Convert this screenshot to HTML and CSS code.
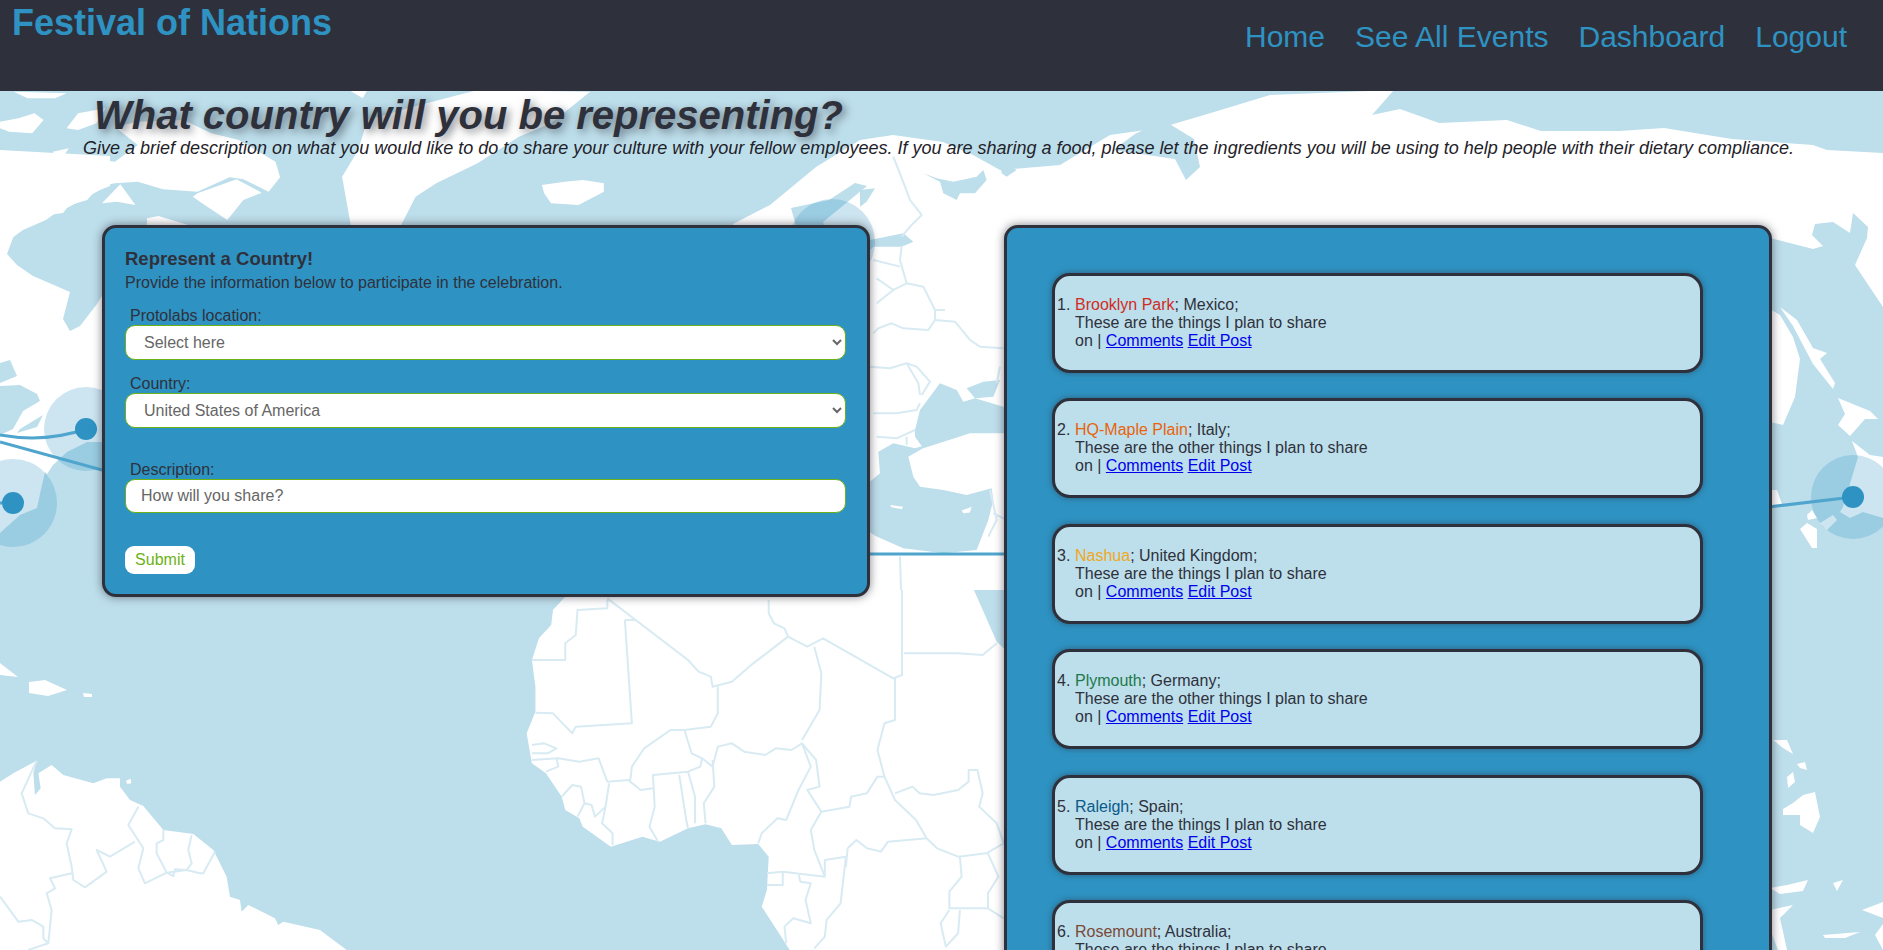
FILE: index.html
```html
<!DOCTYPE html>
<html lang="en">
<head>
<meta charset="utf-8">
<title>Festival of Nations</title>
<link rel="stylesheet" href="styles.css">
</head>
<body>
<svg class="map" viewBox="0 0 1883 950" aria-hidden="true">
  <!-- North America -->
  <path class="land" d="M0 150 110 156 110 442 87 442 67 452 53 465 47 474 45 472 40 494 37 508 20 515 0 533Z"/>
  <path class="sea" d="M110 186 100 190 67 208 63 213 33 217 17 227 7 254 17 265 33 276 70 292 63 319 70 331 80 326 97 304 103 294 110 290Z"/>
  <path class="sea" d="M0 363 10 360 17 376 0 383ZM0 386 20 385 37 394 40 401 23 411 13 429 0 435ZM20 429 43 415 37 427 17 433Z"/>
  <g transform="translate(0 90) scale(.4592 .3333)">
    <path class="land" d="M0 210 60 228 140 232 190 205 250 215 300 165 250 110 300 95 400 90 460 130 520 150 600 215 610 262 585 305 530 268 500 262 430 305 355 298 300 275 250 280 215 290 190 330 140 350 100 390 50 420 0 470Z"/>
    <path class="land" d="M222 340 262 283 295 345 255 335ZM430 310 515 268 570 308 530 330 495 390 440 340 420 320ZM320 385 345 378 410 405 320 415ZM745 260 765 415 870 415 905 320 950 280 1040 220 1130 140 1200 100 1285 5 1040 0 900 50 800 90 780 180ZM1180 285 1230 275 1270 270 1315 280 1315 305 1260 345 1200 340 1185 310ZM0 95 40 85 75 70 95 90 70 130 20 125 0 115ZM145 115 170 70 230 55 210 100 170 120ZM115 185 150 175 140 195 120 195ZM30 5 145 10 120 25 60 25ZM760 0 800 0 790 25Z"/>
  </g>
  <path class="land" d="M0 663 18 677 0 675ZM29 682 45 680 67 690 48 696 29 693ZM83 693 92 694 92 697 84 697Z"/>
  <!-- South America -->
  <g transform="translate(0 730) scale(.3333)">
    <path class="land" d="M0 155 40 130 110 92 100 130 105 195 122 175 115 130 155 105 190 135 280 160 320 145 360 145 360 170 390 210 430 228 490 300 580 312 640 360 680 440 690 500 720 510 725 545 745 525 825 565 835 585 850 575 960 600 1040 660 0 660Z"/>
    <path class="land" d="M378 152 392 146 394 160 382 162Z"/>
    <path class="border" d="M110 92 65 190 85 250 130 265 165 295 215 298 200 340 215 410 220 450 255 472 320 425 290 360 330 380 405 335M415 230 385 285 430 355 415 415 435 460 500 428 470 370 470 340 490 330 490 300M575 315 565 360 575 400 560 420 500 428 520 438 525 418 560 420 600 430 610 430 645 365M215 430 150 445 165 475 140 490 155 540 145 640 85 660M0 500 55 575 95 570 130 590 130 625 145 640"/>
  </g>
  <!-- Europe and Asia -->
  <path class="land" d="M733 224 770 205 816 167 860 140 893 135 943 142 973 155 1000 170 1060 165 1110 135 1160 128 1214 112 1270 95 1394 90 1372 115 1400 109 1439 123 1507 120 1541 131 1619 131 1664 128 1732 139 1813 145 1827 150 1883 153 1883 307 1855 265 1867 238 1868 227 1853 213 1850 233 1833 222 1815 224 1812 235 1823 246 1813 249 1770 238 1770 620 733 620Z"/>
  <path class="sea" d="M1135 134 1113 150 1175 159 1186 180 1200 167 1194 139 1163 120Z"/>
  <path class="sea" d="M823 222 867 186 855 183 829 200 791 208 800 240 830 240Z"/>
  <g transform="translate(860 90) scale(.3333)">
    <path class="sea" d="M190 250 230 265 280 275 350 260 370 240 380 270 345 310 300 310 290 330 250 310 240 275ZM420 215 470 240 440 260 425 250ZM0 300 45 295 20 335 0 350ZM30 450 130 430 160 455 125 470 40 470 30 480ZM165 1020 180 960 240 880 290 900 310 935 345 925 430 950 470 1000 450 1030 330 1030 190 1075 165 1040ZM320 895 370 875 420 870 400 920 345 925ZM55 1085 100 1060 165 1075 215 1060 145 1100 160 1160 180 1190 250 1200 320 1215 395 1195 400 1230 385 1290 350 1380 250 1390 130 1375 50 1340 0 1310 0 1200 60 1150Z"/>
    <path class="land" d="M90 1245 130 1250 125 1258 95 1252ZM305 1262 335 1250 330 1268 310 1270Z"/>
    <path class="border" d="M100 200 135 290 150 330 185 375 150 410 125 440M125 470 120 510 140 580 190 590 225 660 255 660M225 660 225 690 205 720 130 715 95 700 55 715 40 730M225 690 285 695 330 750 360 770 430 775M40 510 120 530M50 565 100 600 140 580M50 640 100 600M30 830 90 835 140 820 170 830 210 875 185 915M140 820 175 880 180 915M40 970 110 970 170 960 180 940M50 1040 110 1045 165 1020M140 1040 140 1065M390 1200 410 1290 385 1340M400 1270 440 1290M120 1400 125 1560M420 830 410 880"/>
  </g>
  <!-- Africa -->
  <g transform="translate(460 590) scale(.3508 .3333)">
    <path class="land" d="M300 0 300 20 265 60 260 105 225 145 205 210 215 290 215 365 190 430 205 520 245 550 290 620 300 660 340 685 350 710 430 770 520 740 570 755 650 715 700 703 745 715 775 765 850 762 880 800 875 900 860 950 940 1080 1568 1080 1568 0Z"/>
    <path class="sea" d="M1465 0 1530 155 1550 175 1568 180 1568 0Z"/>
    <path class="border" d="M420 30 420 55 335 60 330 135 300 160 300 210 205 210M420 25 650 210 680 245 715 260 720 290 775 275 830 225 935 140M470 90 500 90M470 90 490 400 330 410 320 430 265 370 215 368M880 30 880 70 895 100 925 115 935 140 990 170 1035 145 1235 265 1260 255 1260 0M1010 170 1030 250 1025 360 975 450M735 290 735 370 715 410 640 420 600 420 525 475 490 530 485 575 515 600 550 595M640 420 660 490 690 505 685 530 650 545 550 555 555 650 540 710 565 755M720 510 725 590 695 640 700 700M625 555 645 690 650 715M650 545 670 620 670 700M690 505 720 530M720 530 735 470 775 460 810 485 870 495 900 475 945 480 975 460 1000 530 965 600 930 690 905 685 860 730 850 760M975 460 1015 510 1025 590 990 600 1030 665 1000 720 1010 780 1040 860 1040 810 1100 800 1085 940 1045 990 1040 1040 1010 1075M1030 665 1110 650 1115 620 1160 610 1190 560 1210 560 1240 630 1300 690 1330 745 1360 775 1420 800 1500 790 1550 760M1240 265 1240 390 1210 400 1190 480 1210 560M1240 610 1290 590 1310 610 1350 615 1420 600 1450 575 1450 540 1475 540 1490 610 1480 650 1530 700 1550 760M1265 190 1420 190 1490 195 1530 160M1105 775 1130 750 1160 775 1200 785 1220 755 1330 745M1105 775 1100 830M875 850 920 845 1040 860M875 885 920 885 920 845M965 850 970 875 1000 880 985 930 1000 1000 950 985 925 1010 930 1060M1425 800 1430 860 1395 905 1395 955 1505 955 1550 985M1505 790 1535 860 1505 910 1505 955M205 465 240 460 275 475 250 490 205 490M205 510 280 505 340 515 395 505 420 575 480 570 515 600M245 545 280 530 275 505M290 620 320 585 345 590 355 640 335 680M355 640 375 645 385 680 415 650 425 580M415 650 405 700 435 730 435 765M1395 960 1370 1000 1385 1070 1420 1030 1425 960"/>
  </g>
  <!-- Eastern islands -->
  <path class="land" d="M1770 309 1780 315 1793 337 1800 359 1795 397 1783 425 1770 422ZM1780 307 1797 320 1813 348 1827 353 1820 359 1835 383 1833 389 1813 364 1793 326ZM1838 398 1870 411 1878 419 1865 419 1850 436 1838 425 1845 414ZM1852 441 1870 455 1883 457 1883 518 1863 512 1850 518 1840 512 1843 507 1858 457ZM1800 529 1807 523 1817 529 1817 548 1812 548ZM1807 515 1812 510 1817 518 1808 520ZM1820 523 1833 515 1837 520 1827 530ZM1770 490 1777 490 1783 507 1770 508ZM1773 740 1787 740 1793 754 1783 748ZM1783 809 1793 803 1803 795 1815 792 1820 817 1813 833 1800 825 1800 815 1783 815ZM1787 777 1793 772 1795 782 1788 788ZM1797 764 1805 762 1807 770 1800 768ZM1770 888 1787 885 1808 880 1803 891 1780 894ZM1770 910 1793 905 1780 918 1787 950 1778 950 1770 929ZM1833 883 1843 880 1837 891ZM1862 910 1883 902 1883 918ZM1875 935 1883 924 1883 950ZM1823 935 1860 932 1845 938 1825 938Z"/>
  <!-- Routes and markers -->
  <circle class="halo" cx="86" cy="429" r="42"/>
  <circle class="halo" cx="13" cy="503" r="44"/>
  <circle class="halo" cx="832" cy="242" r="43"/>
  <circle class="halo" cx="1853" cy="497" r="42"/>
  <path class="route" d="M0 435 Q45 443 86 429M0 442 102 470M0 503H13M860 554H1010M1760 508 1853 497"/>
  <circle class="dot" cx="86" cy="429" r="11"/>
  <circle class="dot" cx="13" cy="503" r="11"/>
  <circle class="dot" cx="1853" cy="497" r="11"/>
</svg>
<header class="topbar">
  <a class="brand" href="#">Festival of Nations</a>
  <nav class="nav">
    <a href="#">Home</a>
    <a href="#">See All Events</a>
    <a href="#">Dashboard</a>
    <a href="#">Logout</a>
  </nav>
</header>
<main class="main">
  <h1 class="title">What country will you be representing?</h1>
  <p class="intro">Give a brief description on what you would like to do to share your culture with your fellow employees. If you are sharing a food, please let the ingredients you will be using to help people with their dietary compliance.</p>
  <div class="columns">
    <form class="panel form-panel">
      <h2 class="form-title">Represent a Country!</h2>
      <p class="form-sub">Provide the information below to participate in the celebration.</p>
      <label class="field-label">Protolabs location:</label>
      <select class="control"><option>Select here</option></select>
      <label class="field-label second">Country:</label>
      <select class="control"><option>United States of America</option></select>
      <label class="field-label spaced">Description:</label>
      <input class="control text" type="text" placeholder="How will you share?">
      <button class="submit" type="button">Submit</button>
    </form>
    <section class="panel list-panel">
      <ol class="posts">
        <li class="post"><span class="c1">Brooklyn Park</span>; Mexico;<br>These are the things I plan to share<br>on | <a href="#">Comments</a> <a href="#">Edit Post</a></li>
        <li class="post"><span class="c2">HQ-Maple Plain</span>; Italy;<br>These are the other things I plan to share<br>on | <a href="#">Comments</a> <a href="#">Edit Post</a></li>
        <li class="post"><span class="c3">Nashua</span>; United Kingdom;<br>These are the things I plan to share<br>on | <a href="#">Comments</a> <a href="#">Edit Post</a></li>
        <li class="post"><span class="c4">Plymouth</span>; Germany;<br>These are the other things I plan to share<br>on | <a href="#">Comments</a> <a href="#">Edit Post</a></li>
        <li class="post"><span class="c5">Raleigh</span>; Spain;<br>These are the things I plan to share<br>on | <a href="#">Comments</a> <a href="#">Edit Post</a></li>
        <li class="post"><span class="c6">Rosemount</span>; Australia;<br>These are the things I plan to share<br>on | <a href="#">Comments</a> <a href="#">Edit Post</a></li>
      </ol>
    </section>
  </div>
</main>
</body>
</html>
```
FILE: styles.css
```css
* { box-sizing: border-box; }
html, body { height: 950px; overflow: hidden; }
body { margin: 0; background: #bddeeb; font-family: "Liberation Sans", Arial, sans-serif; color: #2e313b; position: relative; }
.map { position: absolute; left: 0; top: 0; width: 1883px; height: 950px; z-index: 0; }
.land { fill: #fff; }
.sea { fill: #bddeeb; }
.border { fill: none; stroke: #d8ebf3; stroke-width: 2px; vector-effect: non-scaling-stroke; stroke-linejoin: round; }
.halo { fill: rgba(46, 147, 195, .24); }
.route { fill: none; stroke: #4fa5cd; stroke-width: 3px; }
.dot { fill: #2e93c3; }
.topbar, .main { position: relative; z-index: 1; }
.topbar { height: 91px; background: #2e313b; display: flex; justify-content: space-between; align-items: flex-start; padding: 0 36px 0 12px; }
.brand { color: #2e93c3; font-size: 36px; font-weight: 700; text-decoration: none; line-height: 46px; }
.nav { display: flex; gap: 30px; padding-top: 20px; }
.nav a { color: #2e93c3; font-size: 30px; line-height: 34px; text-decoration: none; }
.main { padding: 0; }
.title { margin: 0 0 0 94px; padding-top: 2px; font-size: 40px; line-height: 44px; font-style: italic; font-weight: 700; color: #2e313b; text-shadow: 3px 3px 8px rgba(46, 49, 59, .6); }
.intro { margin: 0 0 0 83px; font-size: 18px; line-height: 22px; font-style: italic; color: #1f2229; }
.columns { display: flex; align-items: flex-start; padding: 66px 0 0 102px; gap: 134px; }
.panel { background: #2e93c3; border: 3px solid #2e313b; border-radius: 14px; box-shadow: 0 0 10px rgba(46, 49, 59, .6); width: 768px; }
.form-panel { padding: 19px 20px 20px; display: flex; flex-direction: column; align-items: flex-start; }
.form-title { margin: 0; font-size: 18.5px; line-height: 24px; font-weight: 700; }
.form-sub { margin: 2px 0 0; font-size: 16px; line-height: 20px; }
.field-label { font-size: 16px; line-height: 18px; margin: 14px 0 0 5px; display: block; }
.field-label.second { margin-top: 15px; }
.field-label.spaced { margin-top: 33px; }
.control { width: 721px; height: 35px; border: 1px solid #6cb216; border-radius: 10px; background: #fff; color: #666; font-family: inherit; font-size: 16px; padding: 0 14px; display: block; }
.control.text { height: 34px; padding: 0 15px; }
.control.text::placeholder { color: #666; opacity: 1; }
.submit { margin-top: 33px; height: 28px; width: 70px; border: 0; border-radius: 9px; background: #fff; color: #6cb216; font-family: inherit; font-size: 16px; padding: 0; }
.list-panel { height: 900px; padding: 45px 0 0 45px; }
.posts { margin: 0; padding: 0; width: 651px; display: flex; flex-direction: column; gap: 25.4px; list-style: none; counter-reset: item; }
.post { counter-increment: item; position: relative; background: #bddeeb; border: 3px solid #2e313b; border-radius: 18px; box-shadow: 0 0 6px rgba(46, 49, 59, .55); height: 100px; padding: 20px 0 0 20px; font-size: 16px; line-height: 18px; color: #2e313b; }
.post::before { content: counter(item) "."; position: absolute; left: 2px; top: 20px; }
.post a { color: #0000ee; }
.c1 { color: #d22c1f; } .c2 { color: #e8640c; } .c3 { color: #f0a81e; } .c4 { color: #1d7a4a; } .c5 { color: #0a5a8a; } .c6 { color: #7a4a38; }
```
